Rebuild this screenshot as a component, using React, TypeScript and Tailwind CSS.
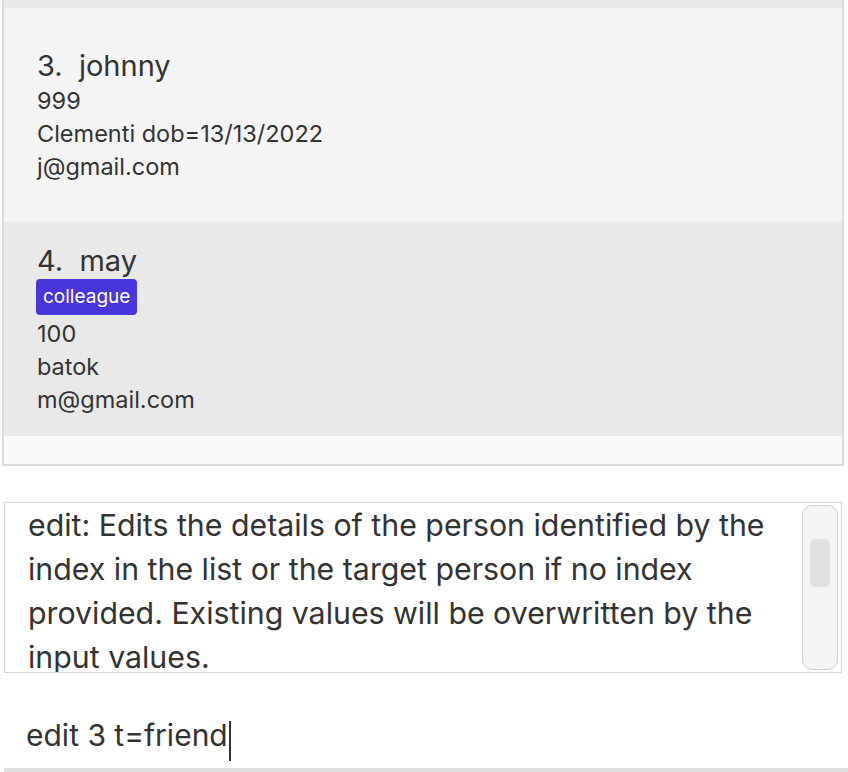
import React from 'react';

type Person = {
  index: number;
  name: string;
  tags: string[];
  lines: string[];
};

const people: Person[] = [
  { index: 3, name: 'johnny', tags: [], lines: ['999', 'Clementi dob=13/13/2022', 'j@gmail.com'] },
  { index: 4, name: 'may', tags: ['colleague'], lines: ['100', 'batok', 'm@gmail.com'] },
];

const resultText =
  'edit: Edits the details of the person identified by the index in the list or the target person if no index provided. Existing values will be overwritten by the input values.';

const PersonCard = ({ person, odd }: { person: Person; odd: boolean }) => (
  <div
    className={`h-[214px] flex flex-col justify-center pl-[33px] text-[#333333] ${
      odd ? 'bg-[#f4f4f4]' : 'bg-[#e9e9e9]'
    }`}
  >
    <div className="text-[29px] leading-[37px] whitespace-pre">
      {person.index}.  {person.name}
    </div>
    {person.tags.length > 0 && (
      <div className="flex gap-2 mb-[2px] -ml-[1px]">
        {person.tags.map((tag) => (
          <span
            key={tag}
            className="h-[36px] px-[7px] rounded-[4px] bg-[#4835db] text-white text-[19px] leading-[36px]"
          >
            {tag}
          </span>
        ))}
      </div>
    )}
    {person.lines.map((line) => (
      <div key={line} className="text-[23.5px] leading-[33px]">
        {line}
      </div>
    ))}
  </div>
);

export default function App() {
  return (
    <div
      className="w-[848px] h-[772px] bg-white overflow-hidden"
      style={{ fontFamily: 'Inter, "Noto Sans", sans-serif' }}
    >
      {/* Person list */}
      <div className="ml-[2px] w-[842px] h-[466px] border-x-2 border-b-2 border-[#dcdcdc] bg-[#fafafa] overflow-hidden">
        <div className="h-[8px] bg-[#e9e9e9]" />
        {people.map((p, i) => (
          <PersonCard key={p.index} person={p} odd={i % 2 === 0} />
        ))}
      </div>

      {/* Result display */}
      <div className="mt-[36px] ml-[4px] w-[838px] h-[171px] border border-[#d6d6d6] flex overflow-hidden">
        <div className="flex-1 pl-[23px] pr-[8px] text-[30.3px] leading-[44px] text-[#333333]">{resultText}</div>
        <div className="shrink-0 w-[36px] mr-[3px] my-[2px] rounded-[10px] border border-[#d0d0d0] bg-[#f4f4f4] flex justify-center pt-[33px]">
          <div className="w-[20px] h-[48px] rounded-[5px] bg-[#e1e1e1]" />
        </div>
      </div>

      {/* Command box */}
      <div className="ml-[4px] w-[844px] h-[99px] pt-[42px] pl-[22px] border-b-4 border-[#dedede]">
        <div className="text-[30px] leading-[40px] text-[#333333] flex items-center">
          <span>edit 3 t=friend</span>
          <span className="inline-block w-[2px] h-[40px] bg-[#333333] translate-x-[1px] translate-y-[6px]" />
        </div>
      </div>
    </div>
  );
}
